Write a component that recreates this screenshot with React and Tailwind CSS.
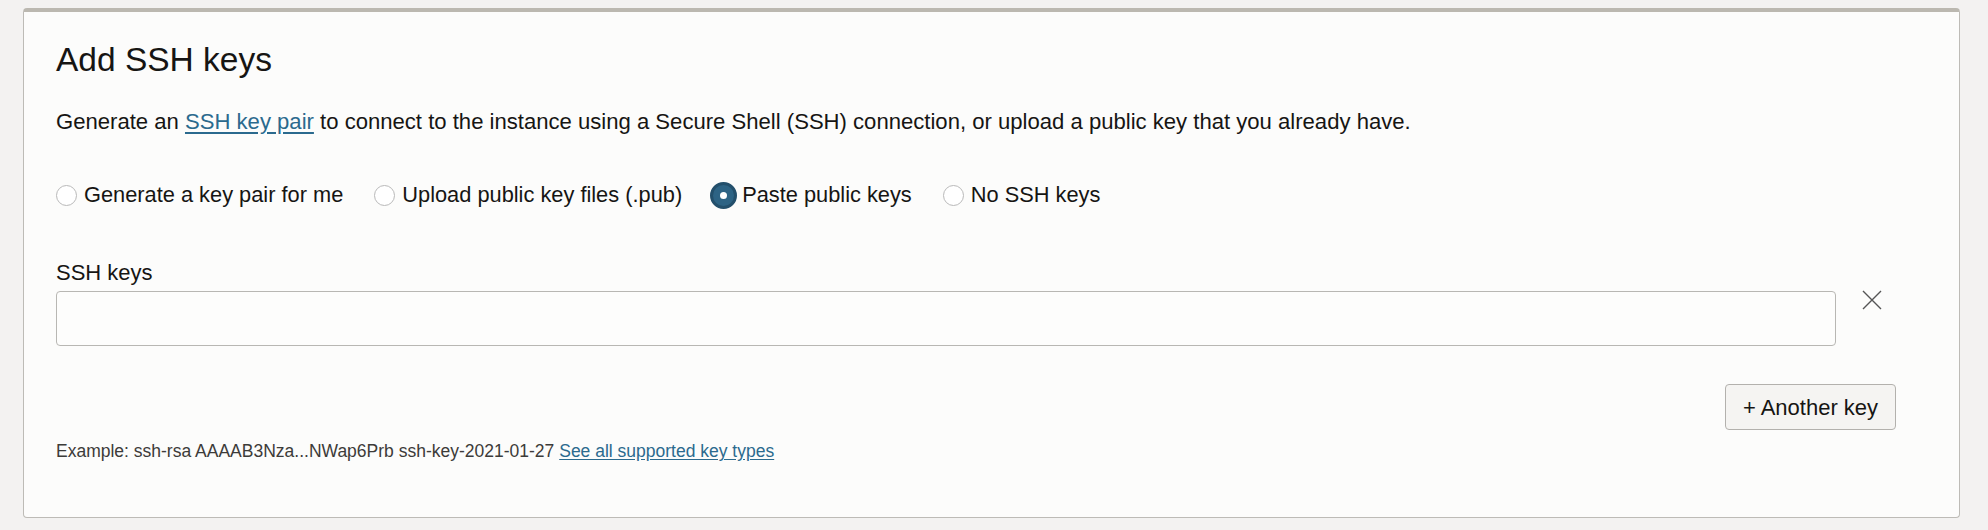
import { useState } from "react";

const OPTIONS = [
    { id: "generate", label: "Generate a key pair for me" },
    { id: "upload", label: "Upload public key files (.pub)" },
    { id: "paste", label: "Paste public keys" },
    { id: "none", label: "No SSH keys" },
];

const Radio = ({ checked, label, onSelect }) => (
    <label className="flex items-center cursor-pointer" onClick={onSelect}>
        {checked ? (
            <span className="w-[27px] h-[27px] rounded-full bg-[#2d6384] border-[3px] border-[#234f6b] flex items-center justify-center ml-[-3px] mr-[5px]">
                <span className="w-[7px] h-[7px] rounded-full bg-white" />
            </span>
        ) : (
            <span className="w-[21px] h-[21px] rounded-full bg-white border border-[#b9b9b9] mr-[7px]" />
        )}
        <span>{label}</span>
    </label>
);

export default function App() {
    const [mode, setMode] = useState("paste");

    return (
        <div className="min-h-[530px] bg-[#f3f2f1] pt-[8px] text-[#161513]" style={{ fontFamily: '"Liberation Sans", Arial, sans-serif' }}>
            <div className="ml-[23px] mr-[28px] h-[510px] bg-[#fcfcfb] border border-[#bdbbb6] border-t-[4px] border-t-[#bbb8b0] rounded-[4px] pl-[32px] pr-[63px] pt-[28px]">
                <h2 className="text-[33.5px] leading-[40px] font-normal">Add SSH keys</h2>

                <p className="text-[22.1px] leading-[28px] mt-[28px]">
                    Generate an{" "}
                    <a href="#" className="text-[#2b6a8e] underline underline-offset-[3px]">SSH key pair</a>{" "}
                    to connect to the instance using a Secure Shell (SSH) connection, or upload a public key that you already have.
                </p>

                <div className="flex items-center gap-[31px] text-[21.8px] leading-[28px] mt-[45px]">
                    {OPTIONS.map(o => (
                        <Radio key={o.id} label={o.label} checked={mode === o.id} onSelect={() => setMode(o.id)} />
                    ))}
                </div>

                <div className="mt-[50px]">
                    <div className="text-[22px] leading-[28px]">SSH keys</div>
                    <div className="flex items-start mt-[4px]">
                        <input className="flex-1 h-[55px] border border-[#b8b7b3] rounded-[4px] bg-[#fdfdfc] px-3 text-[20px] outline-none" />
                        <button className="ml-[26px] mr-[14px] mt-[-1px] w-[20px] h-[20px] text-[#555]">
                            <svg viewBox="0 0 20 20" width="20" height="20" fill="none" stroke="currentColor" strokeWidth="1.4">
                                <path d="M1 1 L19 19 M19 1 L1 19" />
                            </svg>
                        </button>
                    </div>
                </div>

                <div className="flex justify-end mt-[38px]">
                    <button className="w-[171px] h-[46px] bg-[#f5f4f2] border border-[#b3b1ad] rounded-[4px] text-[22px] text-[#161513]">
                        + Another key
                    </button>
                </div>

                <p className="text-[17.5px] leading-[22px] text-[#3c3b39] mt-[10px]">
                    Example: ssh-rsa AAAAB3Nza...NWap6Prb ssh-key-2021-01-27{" "}
                    <a href="#" className="text-[#2b6a8e] underline underline-offset-[2px]">See all supported key types</a>
                </p>
            </div>
        </div>
    );
}
